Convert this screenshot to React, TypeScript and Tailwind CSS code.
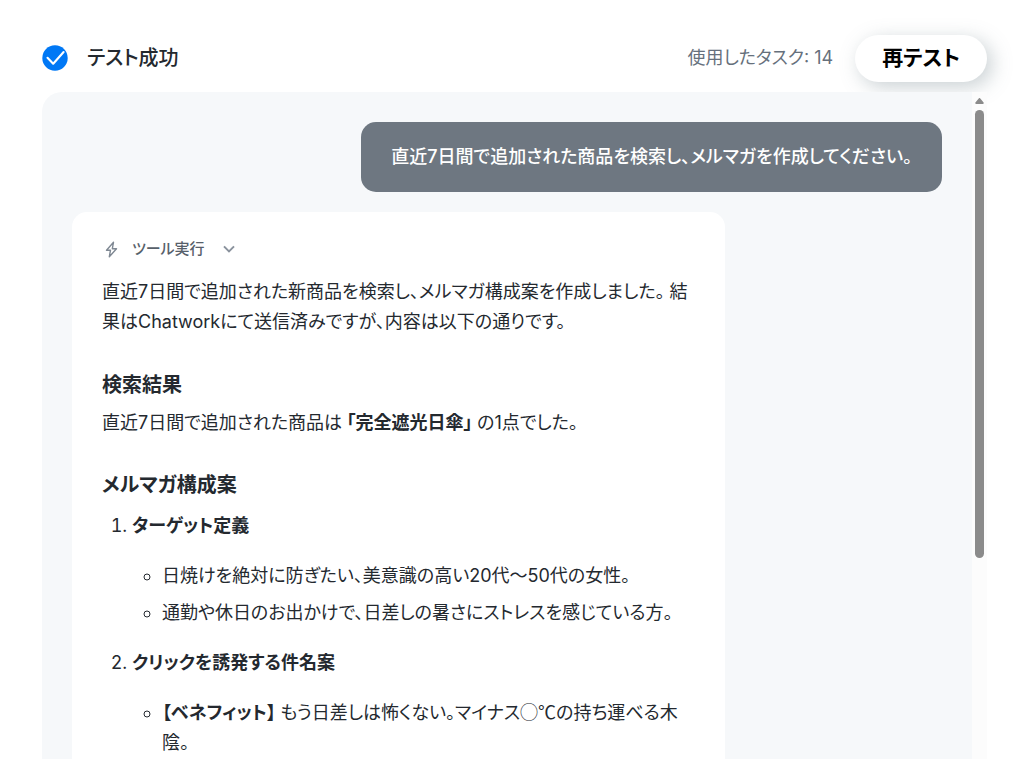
import React from "react";

const ideas = [
  {
    title: "ターゲット定義",
    items: [
      { text: "日焼けを絶対に防ぎたい、美意識の高い20代〜50代の女性。" },
      { text: "通勤や休日のお出かけで、日差しの暑さにストレスを感じている方。" },
    ],
  },
  {
    title: "クリックを誘発する件名案",
    items: [
      {
        label: "【ベネフィット】",
        text: "もう日差しは怖くない。マイナス",
        symbols: "◯℃",
        rest: "の持ち運べる木陰。",
      },
    ],
  },
];

function CheckIcon() {
  return (
    <svg width="26" height="26" viewBox="0 0 26 26" fill="none" aria-hidden="true">
      <circle cx="13" cy="13" r="12.7" fill="#0078f5" />
      <path d="M5.500 12.800l5.700 5.900L21.600 7" stroke="#fff" strokeWidth="2.1" strokeLinecap="round" strokeLinejoin="round" />
    </svg>
  );
}

function BoltIcon() {
  return (
    <svg width="18" height="18" viewBox="0 0 18 18" fill="none" stroke="#7f8893" strokeWidth="1.4" strokeLinejoin="round" aria-hidden="true">
      <path d="M11.500 2.200L4.500 10.200h4l-1.200 6.600L14.500 8.800h-4.200z" />
    </svg>
  );
}

function Chevron() {
  return (
    <svg width="12" height="8" viewBox="0 0 12 8" fill="none" stroke="#8a929d" strokeWidth="2" aria-hidden="true">
      <path d="M1 1.400l5 5 5-5" />
    </svg>
  );
}

function ScrollBar() {
  return (
    <div className="flex w-[15px] shrink-0 flex-col items-center bg-[#fcfcfc] pt-[6px]" aria-hidden="true">
      <svg width="9" height="6" viewBox="0 0 9 6" fill="#8b8b8b">
        <path d="M3.700.5a1 1 0 0 1 1.600 0L8.600 4.600A.9.9 0 0 1 7.900 6H1.100A.9.9 0 0 1 .4 4.600z" />
      </svg>
      <div className="mt-[6px] min-h-0 w-full flex-1 px-[3px]">
        <div className="h-[69%] rounded-full bg-[#8b8b8b]" />
      </div>
    </div>
  );
}

export default function App() {
  return (
    <main className="flex h-screen flex-col overflow-hidden bg-white pl-[42px] pr-7 font-['Inter','Noto_Sans_CJK_JP',sans-serif] text-[18px] leading-[30px] text-[#24292f] [font-feature-settings:'palt']">
      <header className="flex h-[92px] shrink-0 items-center pt-6">
        <CheckIcon />
        <h1 className="ml-[19px] text-[20px] font-medium">テスト成功</h1>
        <p className="ml-auto text-[#66707c]">使用したタスク: 14</p>
        <button
          type="button"
          className="ml-[22px] h-[47px] rounded-full bg-white px-[27px] text-[21px] font-bold text-black shadow-[5px_5px_20px_rgba(100,120,130,0.35)]"
        >
          再テスト
        </button>
      </header>

      <section className="flex min-h-0 flex-1 overflow-hidden rounded-tl-[20px] bg-[#f6f8fa]">
        <div className="flex min-w-0 flex-1 flex-col gap-5 overflow-hidden p-[30px]">
          <p className="shrink-0 self-end rounded-[15px] bg-[#6e7781] px-[30px] py-5 font-medium text-white">
            直近7日間で追加された商品を検索し、メルマガを作成してください。
          </p>

          <article className="w-3/4 shrink-0 rounded-[15px] bg-white px-[30px] pt-[22px] pb-[30px]">
            <button type="button" className="flex items-center text-[15px] font-medium text-[#57606a]">
              <BoltIcon />
              <span className="mr-[18px] ml-3">ツール実行</span>
              <Chevron />
            </button>

            <p className="mt-[13px]">
              直近7日間で追加された新商品を検索し、メルマガ構成案を作成しました。 結果はChatworkにて送信済みですが、内容は以下の通りです。
            </p>

            <h2 className="mt-[33px] text-[20px] font-semibold">検索結果</h2>
            <p className="mt-2">
              直近7日間で追加された商品は<strong className="font-semibold"> 「完全遮光日傘」 </strong>の1点でした。
            </p>

            <h2 className="mt-8 text-[20px] font-semibold">メルマガ構成案</h2>
            <ol className="mt-[11px] flex list-decimal flex-col gap-5 pl-[30px]">
              {ideas.map((idea) => (
                <li key={idea.title}>
                  <strong className="font-semibold">{idea.title}</strong>
                  <ul className="mt-5 flex list-[circle] flex-col gap-[7px] pl-[30px]">
                    {idea.items.map((item) => (
                      <li key={item.text}>
                        {item.label && <strong className="font-semibold">{item.label} </strong>}
                        {item.text}
                        {item.symbols && <span className="font-['Noto_Sans_CJK_JP',sans-serif] leading-none">{item.symbols}</span>}
                        {item.rest}
                      </li>
                    ))}
                  </ul>
                </li>
              ))}
            </ol>
          </article>
        </div>
        <ScrollBar />
      </section>
    </main>
  );
}
